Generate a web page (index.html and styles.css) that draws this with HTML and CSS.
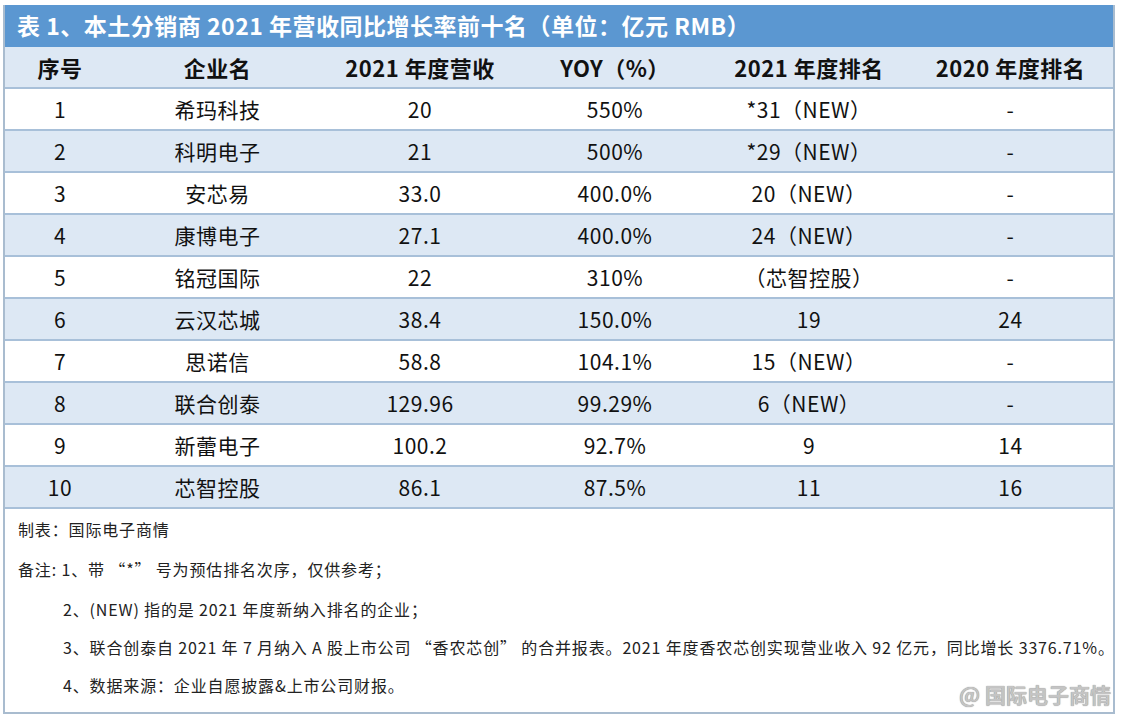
FILE: index.html
```html
<!DOCTYPE html>
<html lang="zh">
<head>
<meta charset="utf-8">
<link rel="stylesheet" href="styles.css">
</head>
<body>
<div class="frame">
  <div class="title">表 1、本土分销商 2021 年营收同比增长率前十名（单位：亿元 RMB）</div>
  <table class="grid">
    <colgroup>
      <col class="c1"><col class="c2"><col class="c3"><col class="c4"><col class="c5"><col class="c6">
    </colgroup>
    <thead>
      <tr><th>序号</th><th>企业名</th><th>2021 年度营收</th><th>YOY（%）</th><th>2021 年度排名</th><th>2020 年度排名</th></tr>
    </thead>
    <tbody>
      <tr><td>1</td><td>希玛科技</td><td>20</td><td>550%</td><td>*31（NEW）</td><td>-</td></tr>
      <tr class="alt"><td>2</td><td>科明电子</td><td>21</td><td>500%</td><td>*29（NEW）</td><td>-</td></tr>
      <tr><td>3</td><td>安芯易</td><td>33.0</td><td>400.0%</td><td>20（NEW）</td><td>-</td></tr>
      <tr class="alt"><td>4</td><td>康博电子</td><td>27.1</td><td>400.0%</td><td>24（NEW）</td><td>-</td></tr>
      <tr><td>5</td><td>铭冠国际</td><td>22</td><td>310%</td><td>（芯智控股）</td><td>-</td></tr>
      <tr class="alt"><td>6</td><td>云汉芯城</td><td>38.4</td><td>150.0%</td><td>19</td><td>24</td></tr>
      <tr><td>7</td><td>思诺信</td><td>58.8</td><td>104.1%</td><td>15（NEW）</td><td>-</td></tr>
      <tr class="alt"><td>8</td><td>联合创泰</td><td>129.96</td><td>99.29%</td><td>6（NEW）</td><td>-</td></tr>
      <tr><td>9</td><td>新蕾电子</td><td>100.2</td><td>92.7%</td><td>9</td><td>14</td></tr>
      <tr class="alt"><td>10</td><td>芯智控股</td><td>86.1</td><td>87.5%</td><td>11</td><td>16</td></tr>
    </tbody>
  </table>
  <div class="notes">
    <p class="line first">制表：国际电子商情</p>
    <p class="line second">备注: 1、带 “*” 号为预估排名次序，仅供参考；</p>
    <p class="line sub">2、(NEW) 指的是 2021 年度新纳入排名的企业；</p>
    <p class="line sub">3、联合创泰自 2021 年 7 月纳入 A 股上市公司 “香农芯创” 的合并报表。2021 年度香农芯创实现营业收入 92 亿元，同比增长 3376.71%。</p>
    <p class="line sub">4、数据来源：企业自愿披露&amp;上市公司财报。</p>
    <div class="mark">@ 国际电子商情</div>
  </div>
</div>
</body>
</html>
```

FILE: styles.css
```css
html, body {
  margin: 0;
  padding: 0;
  background: #ffffff;
}
body {
  font-family: "Noto Sans CJK SC", "Noto Sans", sans-serif;
  color: #111;
}
.frame {
  margin: 5px 0 0 3px;
  width: 1108px;
  border: 2px solid #a9bccf;
  border-top: none;
}
.title {
  height: 42px;
  line-height: 40px;
  background: #5b97d1;
  color: #ffffff;
  font-weight: bold;
  font-size: 23px;
  letter-spacing: 0.5px;
  padding-left: 12px;
  white-space: nowrap;
}
.grid {
  width: 100%;
  border-collapse: collapse;
  table-layout: fixed;
}
.c1 { width: 110px; }
.c2 { width: 205px; }
.c3 { width: 200px; }
.c4 { width: 190px; }
.c5 { width: 198px; }
.c6 { width: auto; }
.grid th, .grid td {
  height: 40px;
  padding: 0;
  text-align: center;
  border-bottom: 2px solid #a8c0d9;
  white-space: nowrap;
}
.grid th {
  background: #dde8f4;
  font-weight: bold;
  font-size: 22px;
  letter-spacing: 0.5px;
  color: #111;
}
.grid td {
  font-size: 21px;
  letter-spacing: 0.5px;
  color: #111;
}
.grid tr.alt td {
  background: #dde8f4;
}
.notes {
  position: relative;
  height: 203px;
  font-size: 16px;
  letter-spacing: 0.85px;
  color: #222;
}
.line {
  margin: 0;
  height: 38px;
  line-height: 38px;
  padding-left: 13px;
  white-space: nowrap;
}
.line.first {
  height: 40px;
  line-height: 40px;
}
.line.second {
  height: 41px;
  line-height: 41px;
}
.line.sub {
  padding-left: 58px;
}
.mark {
  position: absolute;
  right: 2px;
  bottom: 3px;
  font-size: 21px;
  font-weight: bold;
  letter-spacing: 0;
  color: #c4c4c4;
  text-shadow: 0 0 1px #777;
}
```
